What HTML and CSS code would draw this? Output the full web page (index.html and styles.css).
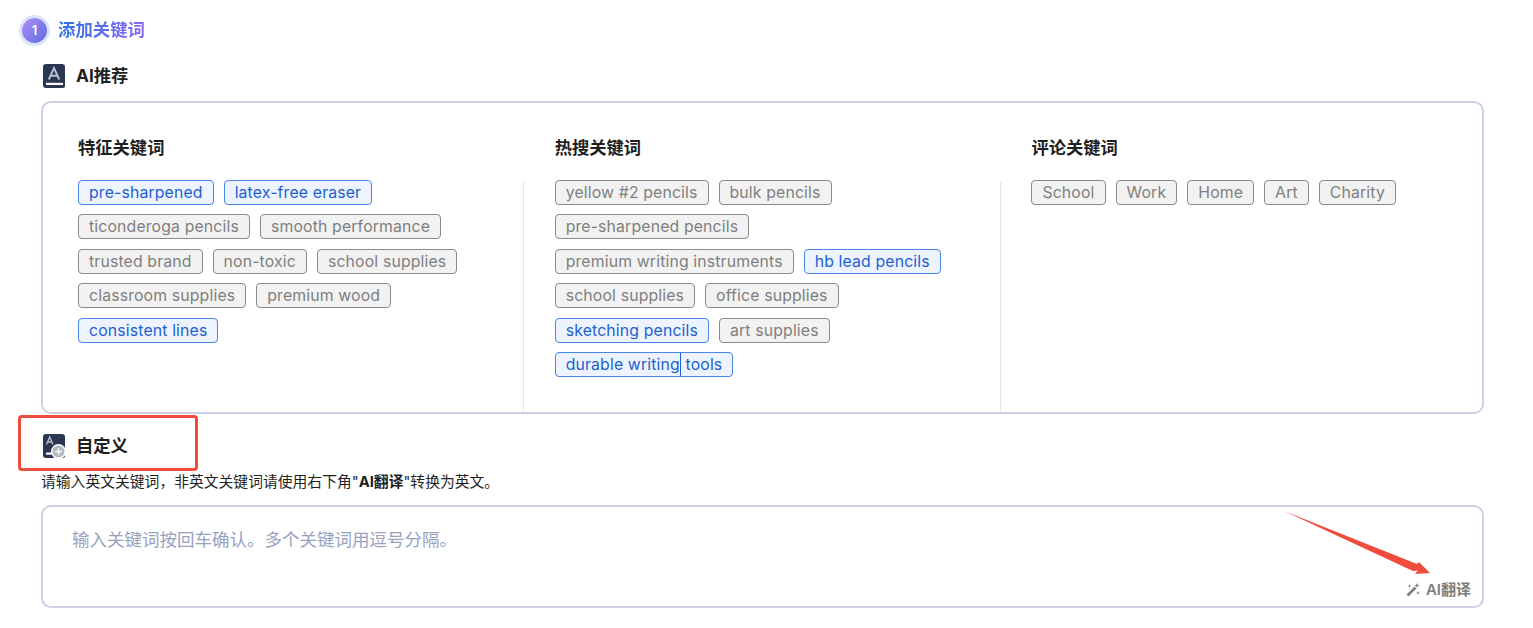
FILE: index.html
```html
<!DOCTYPE html>
<html lang="zh-CN">
<head>
<meta charset="utf-8">
<title>添加关键词</title>
<link rel="stylesheet" href="styles.css">
</head>
<body>
<main class="page">
  <header class="step">
    <span class="step-num">1</span>
    <h1 class="step-title">添加关键词</h1>
  </header>

  <section class="section-head">
    <svg class="sec-icon" viewBox="0 0 22 24"><path d="M3 0h16a3 3 0 0 1 3 3v19a2 2 0 0 1-2 2H3a3 3 0 0 1-3-3V3a3 3 0 0 1 3-3z" fill="#2b3653"/><path d="M5.800 15.500 11 4 16.200 15.500M7.500 11.800h7" fill="none" stroke="#b9bfcd" stroke-width="1.900"/><rect x="3" y="18.800" width="17" height="2.200" fill="#fff"/></svg>
    <h2 class="sec-title">AI推荐</h2>
  </section>

  <section class="card">
    <div class="col">
      <h3 class="col-title">特征关键词</h3>
      <div class="col-body">
        <div class="tags">
          <span class="tag on">pre-sharpened</span><span class="tag on">latex-free eraser</span>
          <span class="tag">ticonderoga pencils</span><span class="tag">smooth performance</span>
          <span class="tag">trusted brand</span><span class="tag">non-toxic</span><span class="tag">school supplies</span>
          <span class="tag">classroom supplies</span><span class="tag">premium wood</span>
          <span class="tag on">consistent lines</span>
        </div>
      </div>
    </div>
    <div class="col">
      <h3 class="col-title">热搜关键词</h3>
      <div class="col-body">
        <div class="tags">
          <span class="tag">yellow #2 pencils</span><span class="tag">bulk pencils</span>
          <span class="tag">pre-sharpened pencils</span>
          <span class="tag">premium writing instruments</span><span class="tag on">hb lead pencils</span>
          <span class="tag">school supplies</span><span class="tag">office supplies</span>
          <span class="tag on">sketching pencils</span><span class="tag">art supplies</span>
          <span class="tag on"><span class="caret">durable writing</span> tools</span>
        </div>
      </div>
    </div>
    <div class="col last">
      <h3 class="col-title">评论关键词</h3>
      <div class="col-body">
        <div class="tags">
          <span class="tag">School</span><span class="tag">Work</span><span class="tag">Home</span><span class="tag">Art</span><span class="tag">Charity</span>
        </div>
      </div>
    </div>
  </section>

  <section class="section-head custom">
    <svg class="sec-icon" viewBox="0 0 22 24"><path d="M3 0h16a3 3 0 0 1 3 3v19a2 2 0 0 1-2 2H3a3 3 0 0 1-3-3V3a3 3 0 0 1 3-3z" fill="#2b3653"/><path d="M3.500 10.500 6.700 3 9.900 10.500M4.800 8h3.800" fill="none" stroke="#b9bfcd" stroke-width="1.300"/><rect x="3" y="18.500" width="11" height="2.200" fill="#fff"/><circle cx="15.500" cy="17.500" r="7.500" fill="#fff"/><circle cx="15.500" cy="17.500" r="6" fill="#b4b8c2"/><path d="M15.500 14.200v6.600M12.200 17.500h6.600" stroke="#fff" stroke-width="1.300"/></svg>
    <h2 class="sec-title">自定义</h2>
    <span class="red-box"></span>
  </section>

  <p class="hint">请输入英文关键词，非英文关键词请使用右下角"<b>AI翻译</b>"转换为英文。</p>

  <section class="input-box">
    <p class="placeholder">输入关键词按回车确认。多个关键词用逗号分隔。</p>
    <div class="translate">
      <svg class="wand" viewBox="0 0 14 14"><path d="M1.500 12.500 9.500 4.500" stroke="#7d7d7d" stroke-width="2.600" fill="none"/><path d="M11 0l.7 1.800 1.800.7-1.800.7-.7 1.800-.7-1.800-1.800-.7 1.800-.7zM3.500 1l.5 1.500 1.500.5-1.500.5-.5 1.500-.5-1.500L1.500 3l1.500-.5zM12 8l.5 1.500 1.500.5-1.500.5-.5 1.500-.5-1.500L10 10l1.500-.5z" fill="#7d7d7d"/></svg>
      <span>AI翻译</span>
    </div>
    <svg class="arrow" viewBox="0 0 150 70"><path d="M0 0 133 53 135 51 146 62 131 63 134 59.500 129 60z" fill="#f04c3e"/></svg>
  </section>
</main>
</body>
</html>
```
FILE: styles.css
```css
* { box-sizing: border-box; }
html, body { margin: 0; padding: 0; background: #fff; }
body {
  width: 1533px;
  height: 628px;
  overflow: hidden;
  font-family: Inter, "Noto Sans CJK SC", sans-serif;
  color: #1f1f1f;
}
h1, h2, h3, p { margin: 0; }
.page { padding: 15px 49px 0 41px; }

.step { display: flex; align-items: center; gap: 11px; margin-left: -19px; height: 30px; }
.step-num {
  width: 25px; height: 25px; border-radius: 50%;
  display: flex; align-items: center; justify-content: center;
  background: linear-gradient(135deg, #b58ff7, #5a6be0);
  box-shadow: 0 0 0 3px #dbe4fb;
  color: #fff; font-size: 13px; font-weight: 600;
}
.step-title {
  font-size: 17.400px; font-weight: 700; line-height: 30px;
  background: linear-gradient(90deg, #2f73e6, #8a66f4);
  -webkit-background-clip: text; background-clip: text; color: transparent;
}

.section-head { display: flex; align-items: center; gap: 11px; height: 24px; margin: 19px 0 13px 2px; position: relative; }
.sec-icon { width: 22px; height: 24px; flex: none; }
.sec-title { font-size: 17.300px; font-weight: 700; color: #1f1f1f; line-height: 24px; }

.card {
  height: 313px; width: 1443px;
  border: 2px solid #cdd0e4; border-radius: 10px;
  padding: 0 0 0 35px;
  display: grid; grid-template-columns: 446px 446px 410px; column-gap: 30.700px;
}
.col { display: flex; flex-direction: column; }
.col-title { font-size: 17.300px; font-weight: 700; line-height: 24px; margin: 33px 0 0; height: 46px; }
.col-body { flex: 1; border-right: 1px solid #e6e6e6; padding-right: 20px; }
.last .col-body { border-right: 0; }
.tags { display: flex; flex-wrap: wrap; align-content: flex-start; gap: 9.400px 10px; margin-top: -2px; }
.tag {
  height: 25px; line-height: 23px; padding: 0 10px;
  border: 1px solid #8a8a8a; border-radius: 4px;
  background: #f2f2f2; color: #7f7f7f;
  font-size: 15.800px; letter-spacing: .15px; white-space: nowrap;
}
.tag.on { border-color: #4a86ea; background: #edf4ff; color: #1d5fd0; }
.caret { display: inline-block; border-right: 1px solid #1d5fd0; height: 23px; }

.custom { margin: 20px 0 14px 2px; }
.red-box {
  position: absolute; left: -25px; top: -19px;
  width: 180px; height: 56px;
  border: 3px solid #f04c3e; border-radius: 4px;
}
.hint { font-size: 14.800px; line-height: 20px; color: #1f1f1f; }
.hint b { font-weight: 700; }

.input-box {
  position: relative;
  margin-top: 13px; width: 1443px; height: 103px;
  border: 2px solid #cdd0e4; border-radius: 10px;
  padding: 20px 29px 0;
}
.placeholder { font-size: 17.500px; line-height: 26px; color: #98a2bf; }
.translate {
  position: absolute; right: 11px; bottom: 6px;
  display: flex; align-items: center; gap: 6px;
  font-size: 15px; font-weight: 600; color: #7d7d7d; line-height: 20px;
}
.wand { width: 14px; height: 14px; }
.arrow { position: absolute; left: 1241px; top: 4px; width: 150px; height: 70px; }
```
